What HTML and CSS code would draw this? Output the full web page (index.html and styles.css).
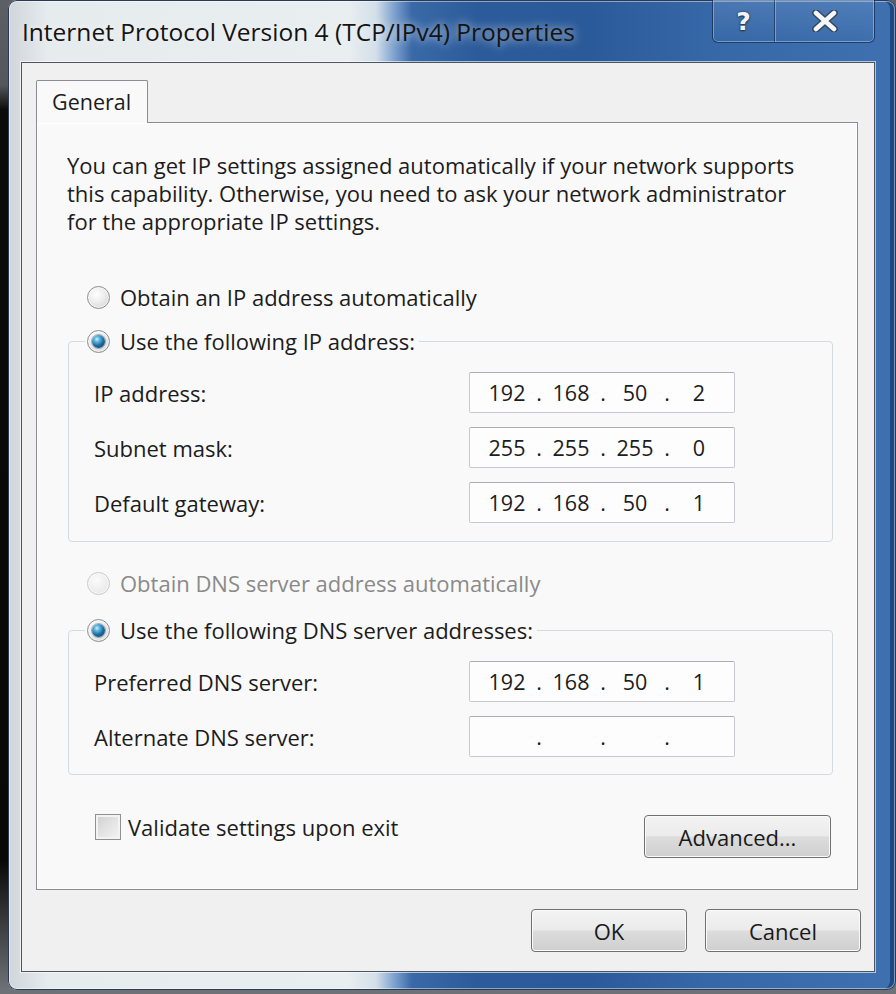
FILE: index.html
```html
<!DOCTYPE html>
<html lang="en">
<head>
<meta charset="utf-8">
<title>Internet Protocol Version 4 (TCP/IPv4) Properties</title>
<link rel="stylesheet" href="styles.css">
</head>
<body>
<div class="window">
  <div class="titlebar">
    <div class="title">Internet Protocol Version 4 (TCP/IPv4) Properties</div>
    <div class="caption-btns">
      <div class="cbtn help">?</div>
      <div class="cbtn close">
        <svg width="26" height="22" viewBox="0 0 26 22">
          <path d="M4 3 L22 19 M22 3 L4 19" stroke="#34465e" stroke-width="7.5" stroke-linecap="round" fill="none"/>
          <path d="M4 3 L22 19 M22 3 L4 19" stroke="#f4f6f8" stroke-width="4.6" stroke-linecap="round" fill="none"/>
        </svg>
      </div>
    </div>
  </div>
  <div class="client">
    <div class="tabs"><div class="tab">General</div></div>
    <div class="panel">
      <p class="intro">You can get IP settings assigned automatically if your network supports<br>this capability. Otherwise, you need to ask your network administrator<br>for the appropriate IP settings.</p>

      <div class="option opt-ip"><span class="radio"></span><span>Obtain an IP address automatically</span></div>

      <fieldset class="group g-ip">
        <legend><span class="radio on"></span><span>Use the following IP address:</span></legend>
        <div class="rows">
          <div class="row"><span class="label">IP address:</span>
            <div class="ip"><span>192</span><i>.</i><span>168</span><i>.</i><span>50</span><i>.</i><span>2</span></div></div>
          <div class="row"><span class="label">Subnet mask:</span>
            <div class="ip"><span>255</span><i>.</i><span>255</span><i>.</i><span>255</span><i>.</i><span>0</span></div></div>
          <div class="row"><span class="label">Default gateway:</span>
            <div class="ip"><span>192</span><i>.</i><span>168</span><i>.</i><span>50</span><i>.</i><span>1</span></div></div>
        </div>
      </fieldset>

      <div class="option opt-dns disabled"><span class="radio"></span><span>Obtain DNS server address automatically</span></div>

      <fieldset class="group g-dns">
        <legend><span class="radio on"></span><span>Use the following DNS server addresses:</span></legend>
        <div class="rows">
          <div class="row"><span class="label">Preferred DNS server:</span>
            <div class="ip"><span>192</span><i>.</i><span>168</span><i>.</i><span>50</span><i>.</i><span>1</span></div></div>
          <div class="row"><span class="label">Alternate DNS server:</span>
            <div class="ip"><span></span><i>.</i><span></span><i>.</i><span></span><i>.</i><span></span></div></div>
        </div>
      </fieldset>

      <div class="bottom-row">
        <label class="check"><span class="checkbox"></span><span>Validate settings upon exit</span></label>
        <div class="btn advanced">Advanced...</div>
      </div>
    </div>
    <div class="actions">
      <div class="btn">OK</div>
      <div class="btn">Cancel</div>
    </div>
  </div>
</div>
</body>
</html>
```

FILE: styles.css
```css
html, body {
  margin: 0;
  padding: 0;
}

body {
  width: 896px;
  height: 994px;
  overflow: hidden;
  background: linear-gradient(180deg, #5c6064 0px, #54585c 85px, #0b0b0b 110px, #080808 860px, #6e7276 990px);
  font-family: "Open Sans", "Noto Sans", sans-serif;
  font-size: 22px;
  color: #1c1c1c;
}

.window {
  margin-left: 8px;
  width: 888px;
  height: 990px;
  box-sizing: border-box;
  padding: 0 21px 18px 13px;
  border-radius: 9px;
  background: linear-gradient(90deg, #cfd5da 0px, #e6ebee 40px, #e9eef1 340px, #d3dfe9 368px, #7ea3cf 386px, #3a69a8 404px, #2c5b9b 470px, #2b5a9a 580px, #3667a6 700px, #3f71b0 888px);
  box-shadow: inset 0 0 0 1px #2a3a52, inset 0 0 0 2px rgba(255,255,255,.45), inset -6px 0 0 #1f4784;
  display: flex;
  flex-direction: column;
}

/* Title bar */
.titlebar {
  height: 62px;
  display: flex;
  justify-content: space-between;
  align-items: flex-start;
  padding-left: 1px;
}

.title {
  padding-top: 17px;
  line-height: 30px;
  font-size: 24.5px;
  color: #141414;
  white-space: nowrap;
  text-shadow: 0 0 8px rgba(255,255,255,.6), 0 0 14px rgba(255,255,255,.35);
}

.caption-btns {
  display: flex;
  height: 42px;
  border: 1px solid rgba(18, 36, 70, .7);
  border-top: none;
  border-radius: 0 0 6px 6px;
  box-shadow: inset 0 0 0 1px rgba(190, 215, 240, .45);
  background: linear-gradient(180deg, rgba(120,160,210,.3), rgba(60,100,160,.12));
  overflow: hidden;
}

.cbtn {
  display: flex;
  align-items: center;
  justify-content: center;
}

.help {
  width: 61px;
  border-right: 1px solid rgba(18, 36, 70, .6);
  box-shadow: 1px 0 0 rgba(190,215,240,.45);
  color: #f2f4f7;
  font-family: "DejaVu Sans", sans-serif;
  font-weight: bold;
  font-size: 25px;
  text-shadow: 0 0 2px #23344c, 0 1px 2px #23344c;
}

.close {
  width: 99px;
}

/* Client area */
.client {
  height: 910px;
  box-sizing: border-box;
  background: #f0f0f0;
  border: 1px solid #4b5563;
  box-shadow: 0 0 0 1px rgba(255,255,255,.6);
  padding: 17px 13px 18px 14px;
  display: flex;
  flex-direction: column;
}

.tabs {
  display: flex;
}

.tab {
  position: relative;
  z-index: 1;
  width: 112px;
  height: 43px;
  box-sizing: border-box;
  margin-bottom: -1px;
  border: 1px solid #898c95;
  border-bottom: none;
  border-radius: 2px 2px 0 0;
  background: #f9f9f9;
  padding-left: 15px;
  line-height: 42px;
  font-size: 21.5px;
}

.panel {
  width: 822px;
  height: 768px;
  box-sizing: border-box;
  border: 1px solid #898c95;
  background: #f9f9f9;
  box-shadow: inset 0 0 0 1px #ffffff;
  display: flex;
  flex-direction: column;
}

.intro {
  margin: 28px 0 0 30px;
  line-height: 28px;
  white-space: nowrap;
}

.option {
  display: flex;
  align-items: center;
  height: 28px;
  padding-left: 50px;
  gap: 10px;
}

.opt-ip {
  margin-top: 48px;
}

.opt-dns {
  margin-top: 27px;
}

.disabled {
  color: #8a8a8a;
}

.radio {
  flex: none;
  width: 23px;
  height: 23px;
  box-sizing: border-box;
  border-radius: 50%;
  border: 1px solid #8c8e90;
  background: radial-gradient(circle at 40% 35%, #ffffff 0, #ececec 45%, #cdcdcd 100%);
  box-shadow: inset 0 0 0 1px rgba(255,255,255,.7);
  display: flex;
  align-items: center;
  justify-content: center;
}

.disabled .radio {
  border-color: #c9cacb;
  background: radial-gradient(circle at 40% 35%, #fbfbfb 0, #efefef 50%, #e2e2e2 100%);
}

.radio.on::after {
  content: "";
  width: 13px;
  height: 13px;
  border-radius: 50%;
  background: radial-gradient(circle at 38% 32%, #c8f2ff 0, #5fb6e2 22%, #1c6a9d 55%, #0c3a5e 100%);
  box-shadow: 0 0 0 1px rgba(20, 50, 80, .35);
}

/* Group boxes */
.group {
  margin: 0 24px 0 31px;
  padding: 0;
  border: 1px solid #d3dbe1;
  border-radius: 4px;
  min-width: 0;
}

.g-ip {
  margin-top: 16px;
}

.g-dns {
  margin-top: 19px;
}

.group legend {
  margin-left: 16px;
  padding: 0 4px 0 2px;
  line-height: 28px;
  height: 28px;
  display: flex;
  align-items: center;
  gap: 10px;
}

.rows {
  display: flex;
  flex-direction: column;
  gap: 14px;
  padding: 17px 0 17px 25px;
}

.g-ip .rows {
  padding-bottom: 18px;
}

.row {
  display: flex;
  align-items: center;
  height: 41px;
}

.label {
  width: 375px;
  flex: none;
}

.ip {
  width: 266px;
  height: 41px;
  box-sizing: border-box;
  border: 1px solid #c7c9ce;
  border-top-color: #abadb3;
  border-radius: 2px;
  background: #fdfdfd;
  display: grid;
  grid-template-columns: 58px 6px 58px 6px 58px 6px 58px;
  padding-left: 8px;
  align-items: center;
  justify-items: center;
  font-size: 21.5px;
}

.ip i {
  font-style: normal;
}

/* Bottom controls */
.bottom-row {
  margin-top: 38px;
  padding: 0 26px 0 58px;
  display: flex;
  justify-content: space-between;
  align-items: flex-start;
}

.check {
  display: flex;
  align-items: center;
  gap: 7px;
  height: 27px;
}

.checkbox {
  width: 26px;
  height: 26px;
  box-sizing: border-box;
  border: 1px solid #8f9091;
  background: linear-gradient(135deg, #cfcfcf 0%, #e3e3e3 50%, #f4f4f4 100%);
  box-shadow: inset 0 0 0 2px #f3f3f3;
}

.btn {
  width: 156px;
  height: 43px;
  box-sizing: border-box;
  border: 1px solid #707070;
  border-radius: 4px;
  background: linear-gradient(180deg, #f3f3f3 0%, #ebebeb 48%, #dcdcdc 52%, #cfcfcf 100%);
  box-shadow: inset 0 0 0 1px #fbfbfb;
  display: flex;
  align-items: center;
  justify-content: center;
  color: #1a1a1a;
}

.advanced {
  width: 187px;
  margin-top: 2px;
}

.actions {
  margin-top: 19px;
  display: flex;
  justify-content: flex-end;
  gap: 18px;
}
```
